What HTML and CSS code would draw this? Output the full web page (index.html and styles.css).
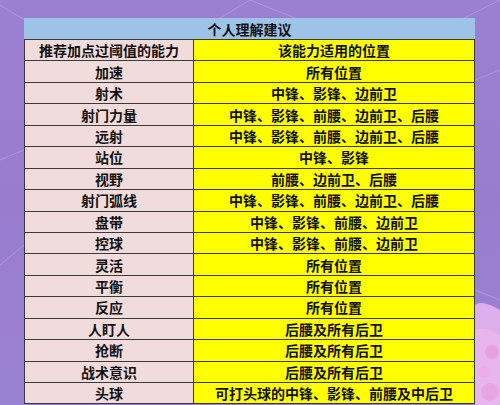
FILE: index.html
```html
<!DOCTYPE html>
<html>
<head>
<meta charset="utf-8">
<link rel="stylesheet" href="styles.css">
</head>
<body>
<div class="bg">
  <svg class="deco" width="500" height="405" viewBox="0 0 500 405">
    <g stroke="#b8a3e6" stroke-width="1" fill="none" opacity="0.7">
      <path d="M0 5 L90 60"/>
      <path d="M200 30 L250 0 L300 20"/>
      <path d="M440 30 L500 0"/>
      <path d="M0 160 L24 150"/>
      <path d="M0 265 L24 245"/>
      <path d="M475 80 L500 70"/>
      <path d="M475 290 L500 300"/>
    </g>
    <path d="M475 305 C482 300 492 306 500 310 L500 405 L475 405 Z" fill="#dcaeea"/>
    <path d="M475 330 C485 326 495 332 500 336 L500 405 L475 405 Z" fill="#e8b6ee"/>
    <circle cx="492" cy="352" r="7" fill="#e58fd8" opacity="0.55"/>
    <circle cx="484" cy="372" r="6" fill="#eea6e2" opacity="0.6"/>
    <circle cx="490" cy="392" r="9" fill="#e69ade" opacity="0.6"/>
  </svg>
  <table class="tbl">
    <colgroup><col class="c1"><col class="c2"></colgroup>
    <tr class="title"><td colspan="2">个人理解建议</td></tr>
    <tr><td class="l">推荐加点过阈值的能力</td><td class="r">该能力适用的位置</td></tr>
    <tr><td class="l">加速</td><td class="r">所有位置</td></tr>
    <tr><td class="l">射术</td><td class="r">中锋、影锋、边前卫</td></tr>
    <tr><td class="l">射门力量</td><td class="r">中锋、影锋、前腰、边前卫、后腰</td></tr>
    <tr><td class="l">远射</td><td class="r">中锋、影锋、前腰、边前卫、后腰</td></tr>
    <tr><td class="l">站位</td><td class="r">中锋、影锋</td></tr>
    <tr><td class="l">视野</td><td class="r">前腰、边前卫、后腰</td></tr>
    <tr><td class="l">射门弧线</td><td class="r">中锋、影锋、前腰、边前卫、后腰</td></tr>
    <tr><td class="l">盘带</td><td class="r">中锋、影锋、前腰、边前卫</td></tr>
    <tr><td class="l">控球</td><td class="r">中锋、影锋、前腰、边前卫</td></tr>
    <tr><td class="l">灵活</td><td class="r">所有位置</td></tr>
    <tr><td class="l">平衡</td><td class="r">所有位置</td></tr>
    <tr><td class="l">反应</td><td class="r">所有位置</td></tr>
    <tr><td class="l">人盯人</td><td class="r">后腰及所有后卫</td></tr>
    <tr><td class="l">抢断</td><td class="r">后腰及所有后卫</td></tr>
    <tr><td class="l">战术意识</td><td class="r">后腰及所有后卫</td></tr>
    <tr><td class="l">头球</td><td class="r">可打头球的中锋、影锋、前腰及中后卫</td></tr>
  </table>
</div>
</body>
</html>
```
FILE: styles.css
```css
html, body {
  margin: 0;
  padding: 0;
}
body {
  width: 500px;
  height: 405px;
  overflow: hidden;
  background: #9a80d0;
  font-family: "Noto Sans CJK SC", "Noto Sans", sans-serif;
}
.bg {
  position: relative;
  width: 500px;
  height: 405px;
  padding: 18px 0 0 24px;
  box-sizing: border-box;
  background: linear-gradient(180deg, #9b7fd1 0%, #987dcf 50%, #9a82d2 100%);
}
.deco {
  position: absolute;
  left: 0;
  top: 0;
}
.tbl {
  position: relative;
  border-collapse: collapse;
  width: 451px;
  table-layout: fixed;
}
.c1 {
  width: 169px;
}
.tbl tr {
  height: 21.45px;
}
.tbl td {
  padding: 0;
  border: 1px solid #3a3a3a;
  text-align: center;
  vertical-align: middle;
  font-size: 14px;
  font-weight: bold;
  line-height: 16px;
  color: #111;
  white-space: nowrap;
}
.tbl tr.title {
  height: 21px;
}
.title td {
  background: #9dc3e6;
  border-left-color: #9dc3e6;
  border-right-color: #9dc3e6;
  border-top-color: #9dc3e6;
}
.l {
  background: #f2dcdb;
}
.r {
  background: #ffff00;
}
```
